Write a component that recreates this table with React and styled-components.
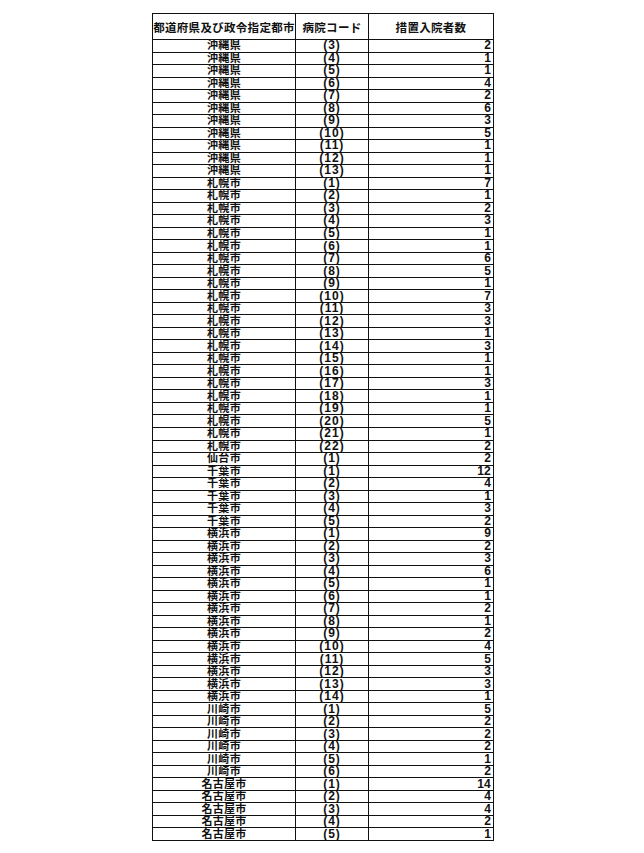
import React from 'react'
import styled, { createGlobalStyle } from 'styled-components'

const Global = createGlobalStyle`
  html, body { margin: 0; padding: 0; background: #fff; }
  body { font-family: "Liberation Sans", "Noto Sans CJK JP", sans-serif; color: #111; }
`

const groups = [
  ['沖縄県', [[3, 2], [4, 1], [5, 1], [6, 4], [7, 2], [8, 6], [9, 3], [10, 5], [11, 1], [12, 1], [13, 1]]],
  ['札幌市', [[1, 7], [2, 1], [3, 2], [4, 3], [5, 1], [6, 1], [7, 6], [8, 5], [9, 1], [10, 7], [11, 3], [12, 3], [13, 1], [14, 3], [15, 1], [16, 1], [17, 3], [18, 1], [19, 1], [20, 5], [21, 1], [22, 2]]],
  ['仙台市', [[1, 2]]],
  ['千葉市', [[1, 12], [2, 4], [3, 1], [4, 3], [5, 2]]],
  ['横浜市', [[1, 9], [2, 2], [3, 3], [4, 6], [5, 1], [6, 1], [7, 2], [8, 1], [9, 2], [10, 4], [11, 5], [12, 3], [13, 3], [14, 1]]],
  ['川崎市', [[1, 5], [2, 2], [3, 2], [4, 2], [5, 1], [6, 2]]],
  ['名古屋市', [[1, 14], [2, 4], [3, 4], [4, 2], [5, 1]]],
]

const rows = groups.flatMap(([city, list]) => list.map(([code, n]) => ({ city, code, n })))

const Page = styled.div`
  padding: 13px 0 0 152px;
`

const Table = styled.table`
  border-collapse: collapse;
  table-layout: fixed;
  width: 341px;
  border: 1.3px solid #111;
`

const Head = styled.th`
  height: 25px;
  padding: 0;
  border: 1.3px solid #111;
  font-size: 11.5px;
  font-weight: 700;
  letter-spacing: 0.3px;
  text-align: center;
  vertical-align: middle;
`

const Row = styled.tr`
  height: 12.53px;
`

const Cell = styled.td`
  padding: ${p => (p.$right ? '0 2px 0 0' : '0')};
  height: 11.5px;
  border: 1.2px solid #111;
  font-size: 11px;
  font-weight: 700;
  line-height: 11px;
  letter-spacing: 0.3px;
  text-align: ${p => (p.$right ? 'right' : 'center')};
  vertical-align: middle;
  white-space: nowrap;
  overflow: hidden;
`

const Num = styled.span`
  font-size: 12px;
  letter-spacing: ${p => (p.$wide ? '1px' : '0.2px')};
`

export default function App() {
  return (
    <Page>
      <Global />
      <Table>
        <colgroup>
          <col style={{ width: 143 }} />
          <col style={{ width: 73 }} />
          <col style={{ width: 125 }} />
        </colgroup>
        <thead>
          <tr>
            <Head>都道府県及び政令指定都市</Head>
            <Head>病院コード</Head>
            <Head>措置入院者数</Head>
          </tr>
        </thead>
        <tbody>
          {rows.map((r, i) => (
            <Row key={i}>
              <Cell>{r.city}</Cell>
              <Cell><Num $wide>({r.code})</Num></Cell>
              <Cell $right><Num>{r.n}</Num></Cell>
            </Row>
          ))}
        </tbody>
      </Table>
    </Page>
  )
}
